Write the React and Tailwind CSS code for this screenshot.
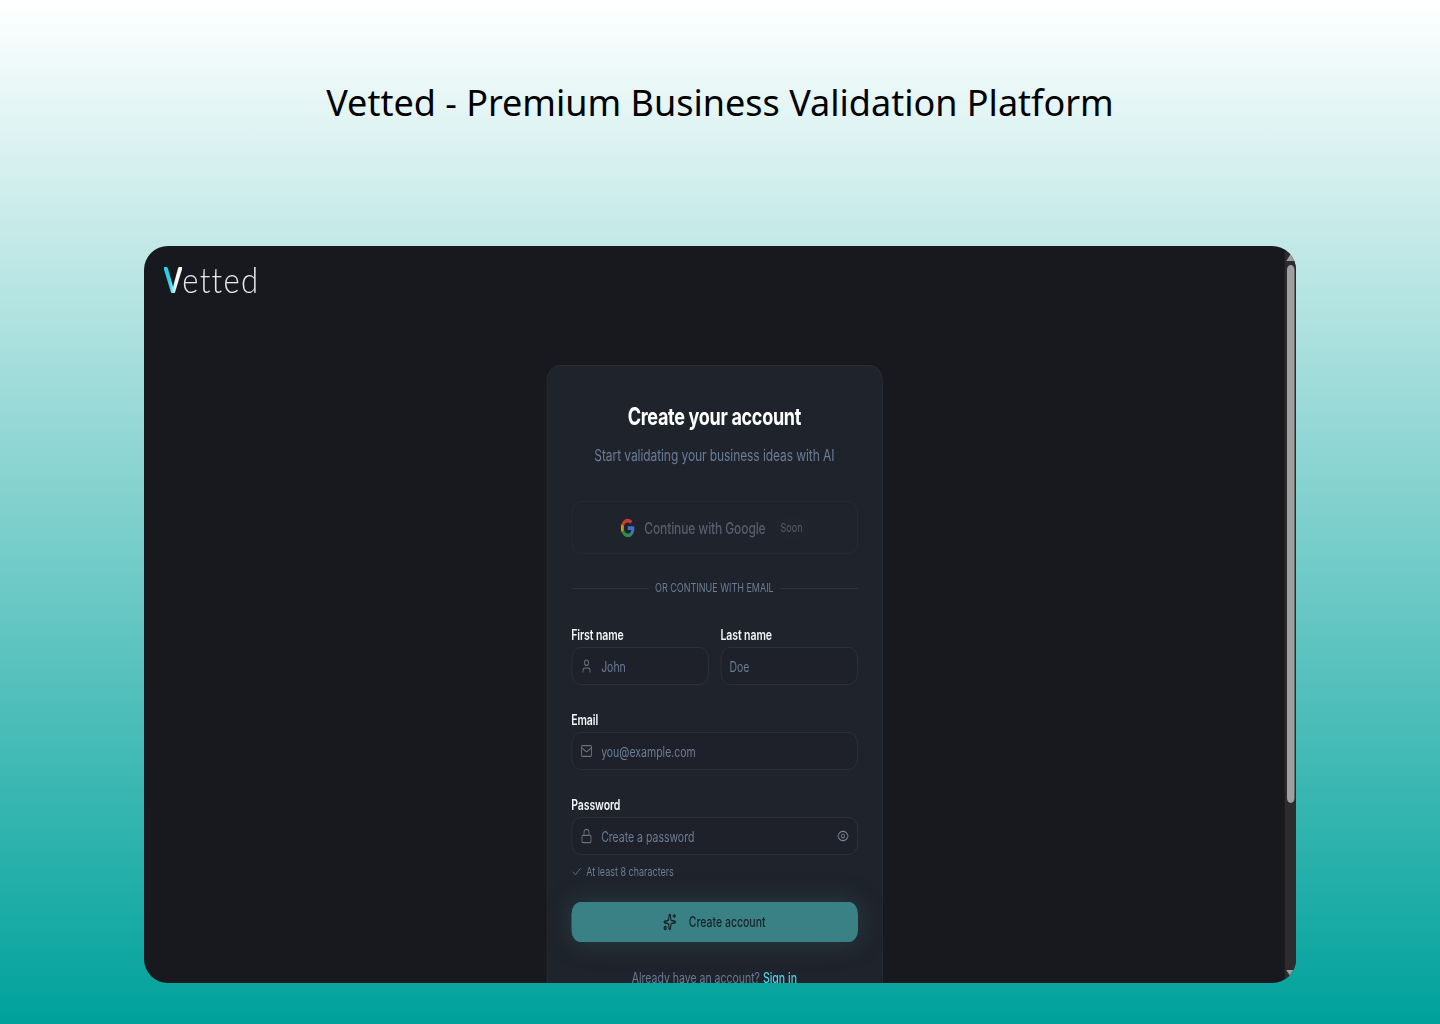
import React from 'react';
import { User, Mail, Lock, Eye, Check, Sparkles } from 'lucide-react';

function GoogleIcon() {
  return (
    <svg viewBox="0 0 24 24" className="w-[20px] h-[20px] shrink-0 opacity-80">
      <path fill="#4285F4" d="M22.56 12.25c0-.78-.07-1.53-.2-2.25H12v4.26h5.92c-.26 1.37-1.04 2.53-2.21 3.31v2.77h3.57c2.08-1.92 3.28-4.74 3.28-8.09z" />
      <path fill="#34A853" d="M12 23c2.97 0 5.46-.98 7.28-2.66l-3.57-2.77c-.98.66-2.23 1.06-3.71 1.06-2.86 0-5.29-1.93-6.16-4.53H2.18v2.84C3.99 20.53 7.7 23 12 23z" />
      <path fill="#FBBC05" d="M5.84 14.09c-.22-.66-.35-1.36-.35-2.09s.13-1.43.35-2.09V7.07H2.18C1.43 8.55 1 10.22 1 12s.43 3.45 1.18 4.93l3.66-2.84z" />
      <path fill="#EA4335" d="M12 5.38c1.62 0 3.06.56 4.21 1.64l3.15-3.15C17.45 2.09 14.97 1 12 1 7.7 1 3.99 3.47 2.18 7.07l3.66 2.84c.87-2.6 3.3-4.53 6.16-4.53z" />
    </svg>
  );
}

function Field({ label, placeholder, type = 'text', icon: Icon, trailing: Trailing }) {
  return (
    <div className="flex-1 min-w-0">
      <label className="block text-sm font-semibold tracking-[-0.1px] leading-5 text-[#f4f5f7] mb-[2px]">{label}</label>
      <div className="h-[38px] flex items-center gap-[12px] pl-[11px] pr-[11px] rounded-xl border border-[#2d323b] bg-[#1e2129]">
        {Icon && <Icon className="w-[16px] h-[16px] shrink-0 text-[#6b7280]" strokeWidth={1.75} />}
        <input
          type={type}
          placeholder={placeholder}
          className="w-full min-w-0 pt-[1px] bg-transparent outline-none text-sm placeholder:text-[#6b7c96]"
        />
        {Trailing && <Trailing className="w-[16px] h-[16px] shrink-0 text-[#7b8494]" strokeWidth={1.75} />}
      </div>
    </div>
  );
}

function SignupCard() {
  return (
    <div className="w-[448px] mx-auto mt-[54px] px-8 pt-[35px] pb-8 rounded-2xl border border-[#2a2e36] bg-[#1f232b] shrink-0">
      <h1 className="text-center text-2xl leading-8 font-bold tracking-[-0.4px] text-white">Create your account</h1>
      <p className="mt-[10px] text-center text-base leading-6 tracking-[-0.1px] text-[#6b7c96]">Start validating your business ideas with AI</p>

      <button className="mt-[34px] w-full h-[53px] flex items-center justify-center gap-3 rounded-xl border border-[#282c34] text-base font-medium tracking-[-0.15px] text-[#565d6b]">
        <GoogleIcon />
        <span>Continue with Google</span>
        <span className="px-2 py-[2px] rounded bg-[#21242c] text-xs tracking-normal font-normal text-[#565d6b]">Soon</span>
      </button>

      <div className="mt-[26px] flex items-center gap-2">
        <div className="flex-1 h-px bg-[#2d323b]"></div>
        <span className="text-xs leading-4 text-[#6b7c96] uppercase">Or continue with email</span>
        <div className="flex-1 h-px bg-[#2d323b]"></div>
      </div>

      <div className="mt-[29px] flex flex-col gap-[25px]">
        <div className="flex gap-4">
          <Field label="First name" placeholder="John" icon={User} />
          <Field label="Last name" placeholder="Doe" />
        </div>
        <Field label="Email" placeholder="you@example.com" type="email" icon={Mail} />
        <div>
          <Field label="Password" placeholder="Create a password" type="password" icon={Lock} trailing={Eye} />
          <div className="mt-[9px] flex items-center gap-[6px] text-xs leading-4 text-[#6b7c96]">
            <Check className="w-3.5 h-3.5 text-[#6b7c96]" strokeWidth={1.5} />
            At least 8 characters
          </div>
        </div>
      </div>

      <button className="mt-[22px] w-full h-[40px] flex items-center justify-center gap-4 rounded-xl bg-[#3a8186] text-sm font-medium text-[#1a2027] shadow-[0_0_32px_rgba(58,129,134,0.3)]">
        <Sparkles className="w-[18px] h-[18px]" strokeWidth={2} />
        Create account
      </button>

      <p className="mt-[26px] text-center text-sm leading-5 text-[#6b7c96]">
        Already have an account? <a className="font-medium text-[#4fd3e6]">Sign in</a>
      </p>
    </div>
  );
}

function Scrollbar() {
  return (
    <div className="w-[15px] h-full shrink-0 bg-[#2c2c2c] flex flex-col items-center">
      <div className="mt-[8px] w-0 h-0 border-x-[6px] border-x-transparent border-b-[7px] border-b-[#9f9f9f]"></div>
      <div className="mt-[4px] w-[10px] h-[538px] rounded-full bg-[#9f9f9f]"></div>
      <div className="mt-auto mb-[6px] w-0 h-0 border-x-[6px] border-x-transparent border-t-[7px] border-t-[#9f9f9f]"></div>
    </div>
  );
}

export default function App() {
  return (
    <div className="w-[1440px] h-[1024px] overflow-hidden flex flex-col items-center bg-linear-to-b/srgb from-white to-[#00a19b] font-['Inter',sans-serif]">
      <h2 className="mt-[78px] text-[36px] leading-[50px] font-normal text-black font-['Noto_Sans',sans-serif]">
        Vetted - Premium Business Validation Platform
      </h2>

      {/* the app screenshot is squashed horizontally, 1536 wide down to 1152 */}
      <div className="mt-[118px] w-[1152px] h-[737px] rounded-[24px] overflow-hidden bg-[#18191e]">
        <div className="w-[1536px] h-[737px] origin-top-left scale-x-[0.75] flex">
          <div className="flex-1 min-w-0 h-full flex flex-col overflow-hidden">
            <div className="pl-[26px] pt-[8px] h-[65px] shrink-0 text-[36px] leading-[50px] font-['Lato',sans-serif] font-light text-[#e5e7eb]">
              <span className="font-black text-transparent bg-clip-text bg-linear-to-r/srgb from-[#22d3e6] from-30% to-white to-70%">V</span>
              <span className="inline-block origin-left scale-x-[1.15] tracking-[1.5px]">etted</span>
            </div>
            <SignupCard />
          </div>
          <Scrollbar />
        </div>
      </div>
    </div>
  );
}
